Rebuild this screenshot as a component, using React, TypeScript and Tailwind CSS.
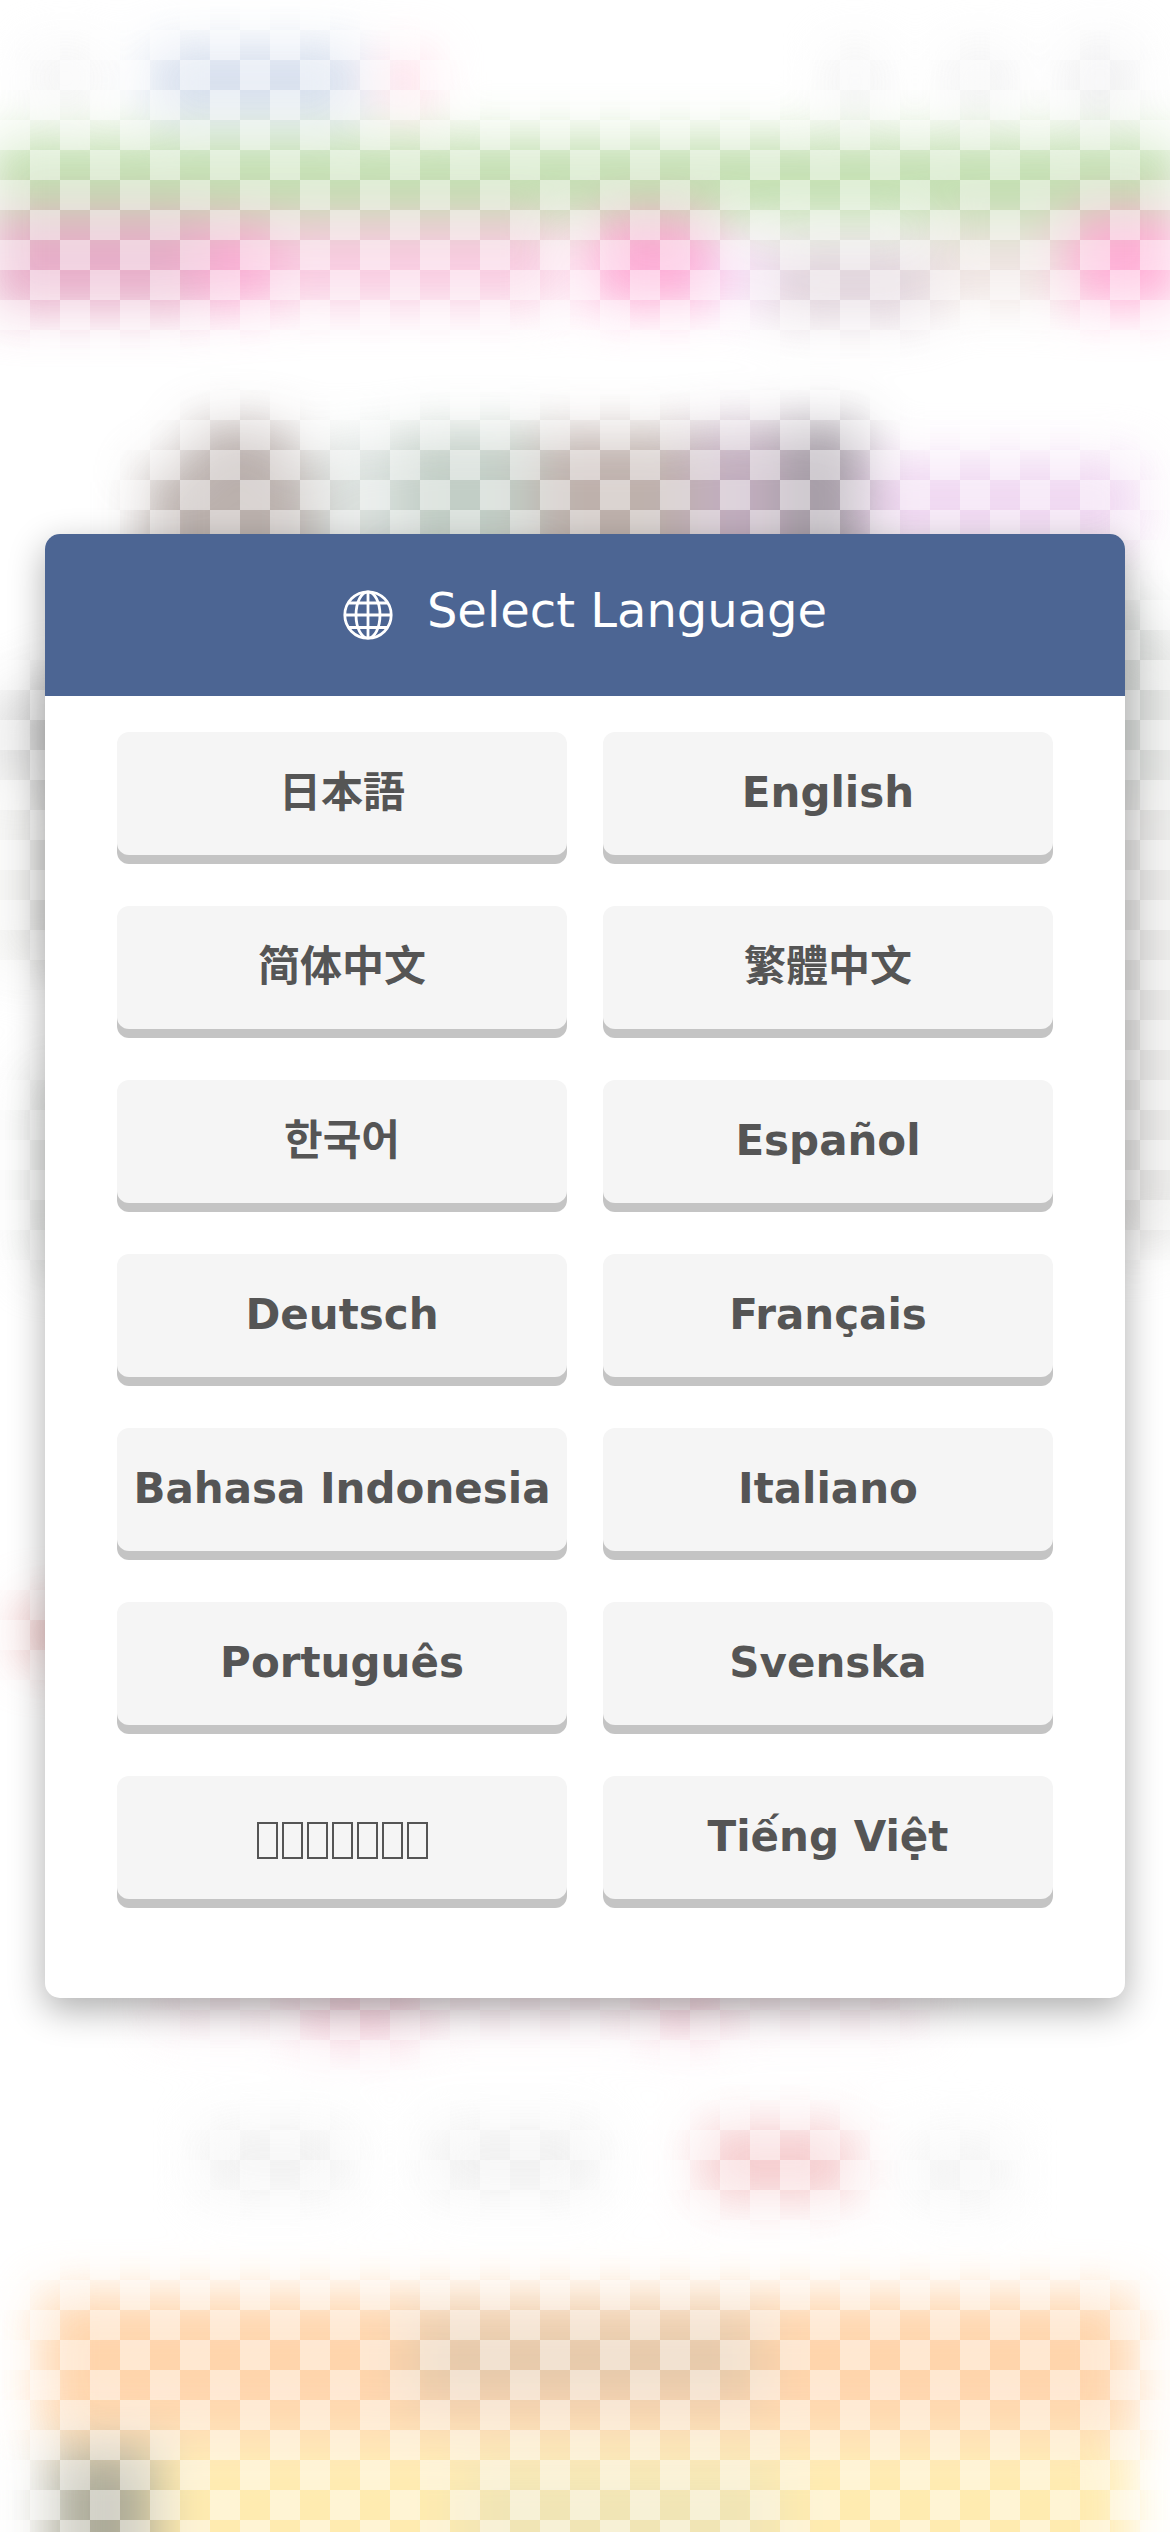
import React from "react";

type Language = { label: string; lang: string; font: string; boxed?: boolean };

const latin = "font-['DejaVu_Sans',sans-serif]";

const languages: Language[] = [
  { label: "日本語", lang: "ja", font: "font-['DejaVu_Sans','Noto_Sans_CJK_JP',sans-serif]" },
  { label: "English", lang: "en", font: latin },
  { label: "简体中文", lang: "zh-Hans", font: "font-['DejaVu_Sans','Noto_Sans_CJK_SC',sans-serif]" },
  { label: "繁體中文", lang: "zh-Hant", font: "font-['DejaVu_Sans','Noto_Sans_CJK_TC',sans-serif]" },
  { label: "한국어", lang: "ko", font: "font-['DejaVu_Sans','Noto_Sans_CJK_KR',sans-serif]" },
  { label: "Español", lang: "es", font: latin },
  { label: "Deutsch", lang: "de", font: latin },
  { label: "Français", lang: "fr", font: latin },
  { label: "Bahasa Indonesia", lang: "id", font: latin },
  { label: "Italiano", lang: "it", font: latin },
  { label: "Português", lang: "pt", font: latin },
  { label: "Svenska", lang: "sv", font: latin },
  { label: "ภาษาไทย", lang: "th", font: latin, boxed: true },
  { label: "Tiếng Việt", lang: "vi", font: latin },
];

// Soft colour patches behind the dialog: x, y, width, height, fill
type Patch = [number, number, number, number, string];

const patches: Patch[] = [
  [30, 50, 70, 55, "#f1f1f2"],
  [150, 45, 210, 72, "#d0daeb"],
  [382, 52, 50, 58, "#ffd8e4"],
  [830, 50, 50, 60, "#eeeeef"],
  [950, 50, 60, 60, "#eeeeef"],
  [1070, 45, 60, 70, "#eaeaec"],
  [-10, 138, 1190, 82, "#bbdba7"],
  [-10, 217, 570, 88, "#f8c5dd"],
  [-10, 212, 210, 100, "#e5a5c3"],
  [200, 220, 70, 88, "#f9a3ce"],
  [590, 214, 120, 93, "#fda3d1"],
  [710, 240, 60, 65, "#f5dcf6"],
  [770, 245, 160, 75, "#dccdd6"],
  [930, 220, 140, 82, "#ece0dd"],
  [1070, 210, 110, 97, "#ffa5d1"],
  [190, 425, 100, 400, "#aea29f"],
  [145, 465, 180, 400, "#b4a9a5"],
  [315, 438, 90, 300, "#d8dfdc"],
  [400, 430, 140, 140, "#bcc9c0"],
  [535, 432, 160, 300, "#b8a9a4"],
  [690, 426, 100, 300, "#bca6b8"],
  [780, 422, 85, 300, "#9c939d"],
  [865, 458, 275, 90, "#eed3f0"],
  [-10, 690, 55, 90, "#dcdcdc"],
  [40, 670, 40, 300, "#b4b4b4"],
  [-10, 785, 60, 190, "#efefed"],
  [30, 1070, 50, 200, "#d8dad8"],
  [20, 1600, 60, 65, "#edbcbc"],
  [1110, 600, 38, 190, "#bcc1be"],
  [1110, 790, 38, 460, "#d2d0cf"],
  [1150, 640, 40, 600, "#e6e6e4"],
  [150, 1960, 780, 70, "#faeaf0"],
  [300, 1985, 120, 58, "#f6ccda"],
  [650, 1985, 70, 52, "#f7cedb"],
  [200, 2125, 150, 70, "#efefef"],
  [430, 2125, 170, 70, "#eeeeee"],
  [700, 2125, 155, 75, "#f4c5c7"],
  [910, 2135, 100, 70, "#f2f2f2"],
  [40, 2294, 1095, 142, "#ffd1a4"],
  [410, 2315, 350, 90, "#e4c5a4"],
  [50, 2442, 1080, 160, "#ffe9a8"],
  [460, 2465, 320, 140, "#f0e3ae"],
  [50, 2450, 105, 160, "#a4a28e"],
];

function Backdrop() {
  return (
    <div aria-hidden="true" className="absolute inset-0 overflow-hidden bg-white">
      <svg
        viewBox="0 0 1170 2532"
        preserveAspectRatio="none"
        className="h-full w-full overflow-visible opacity-90 blur-[25px]"
      >
        {patches.map(([x, y, width, height, fill], i) => (
          <rect key={i} x={x} y={y} width={width} height={height} fill={fill} />
        ))}
      </svg>
      <div className="absolute inset-0 bg-[repeating-conic-gradient(transparent_0_25%,rgb(255_255_255_/_0.45)_0_50%)] bg-[length:60px_60px]" />
    </div>
  );
}

function GlobeIcon() {
  return (
    <svg
      aria-hidden="true"
      viewBox="0 0 50 50"
      className="size-[50px] shrink-0"
      fill="none"
      stroke="currentColor"
      strokeWidth="2.8"
    >
      <circle cx="25" cy="25" r="23.2" />
      <ellipse cx="25" cy="25" rx="12" ry="23.2" />
      <path d="M25 1.8V48.2M1.8 25H48.2M5.5 13H44.5M5.5 37.5H44.5" />
    </svg>
  );
}

// One empty box per character of the name
function BoxedLabel({ text }: { text: string }) {
  return (
    <span aria-hidden="true" className="mt-2 flex justify-center gap-1">
      {Array.from(text).map((_, i) => (
        <span key={i} className="h-[37px] w-[21px] border-2 border-[#555]" />
      ))}
    </span>
  );
}

export default function App() {
  return (
    <main className="relative flex min-h-screen items-center justify-center px-[45px] py-12 font-['DejaVu_Sans',sans-serif]">
      <Backdrop />
      <section
        role="dialog"
        aria-labelledby="language-title"
        className="relative w-full overflow-hidden rounded-[15px] bg-white shadow-[0_12px_36px_rgb(0_0_0_/_0.32)]"
      >
        <header className="flex h-[162px] items-center justify-center gap-[34px] bg-[#4c6593] text-white">
          <GlobeIcon />
          <h2 id="language-title" className="pb-[10px] text-[48px] leading-[56px]">
            Select Language
          </h2>
        </header>
        <div className="grid grid-cols-2 gap-x-9 gap-y-[51px] px-[72px] pt-9 pb-[99px]">
          {languages.map(({ label, lang, font, boxed }) => (
            <button
              key={lang}
              type="button"
              lang={lang}
              aria-label={boxed ? label : undefined}
              className={`${font} h-[123px] rounded-xl bg-[#f5f5f5] pb-[2px] text-[42px] leading-[50px] font-bold whitespace-nowrap text-[#555] shadow-[0_9px_0_#c4c4c4]`}
            >
              {boxed ? <BoxedLabel text={label} /> : label}
            </button>
          ))}
        </div>
      </section>
    </main>
  );
}
